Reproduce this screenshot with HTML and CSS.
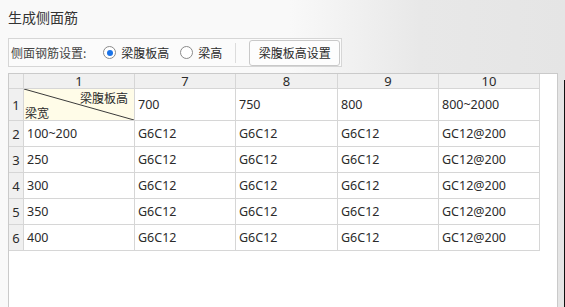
FILE: index.html
```html
<!DOCTYPE html>
<html>
<head>
  <title>生成侧面筋</title>
  <link rel="stylesheet" href="styles.css">
</head>
<body>
  <div class="page">
    <h1 class="title">生成侧面筋</h1>

    <div class="toolbar">
      <span class="label">侧面钢筋设置:</span>
      <label class="radio checked"><span class="dot"></span>梁腹板高</label>
      <label class="radio"><span class="dot"></span>梁高</label>
      <span class="sep"></span>
      <button class="btn">梁腹板高设置</button>
    </div>

    <div class="panel">
      <div class="grid">
        <!-- header row -->
        <div class="cell head"></div>
        <div class="cell head">1</div>
        <div class="cell head">7</div>
        <div class="cell head">8</div>
        <div class="cell head">9</div>
        <div class="cell head">10</div>

        <!-- row 1 -->
        <div class="cell rowhead">1</div>
        <div class="cell diag">
          <svg class="diag-line" viewBox="0 0 100 100" preserveAspectRatio="none">
            <line x1="0" y1="0" x2="100" y2="100" stroke="#3a3a3a" stroke-width="1" vector-effect="non-scaling-stroke"/>
          </svg>
          <span class="diag-top">梁腹板高</span>
          <span class="diag-bottom">梁宽</span>
        </div>
        <div class="cell">700</div>
        <div class="cell">750</div>
        <div class="cell">800</div>
        <div class="cell">800~2000</div>

        <div class="cell rowhead">2</div>
        <div class="cell">100~200</div>
        <div class="cell">G6C12</div>
        <div class="cell">G6C12</div>
        <div class="cell">G6C12</div>
        <div class="cell">GC12@200</div>

        <div class="cell rowhead">3</div>
        <div class="cell">250</div>
        <div class="cell">G6C12</div>
        <div class="cell">G6C12</div>
        <div class="cell">G6C12</div>
        <div class="cell">GC12@200</div>

        <div class="cell rowhead">4</div>
        <div class="cell">300</div>
        <div class="cell">G6C12</div>
        <div class="cell">G6C12</div>
        <div class="cell">G6C12</div>
        <div class="cell">GC12@200</div>

        <div class="cell rowhead">5</div>
        <div class="cell">350</div>
        <div class="cell">G6C12</div>
        <div class="cell">G6C12</div>
        <div class="cell">G6C12</div>
        <div class="cell">GC12@200</div>

        <div class="cell rowhead">6</div>
        <div class="cell">400</div>
        <div class="cell">G6C12</div>
        <div class="cell">G6C12</div>
        <div class="cell">G6C12</div>
        <div class="cell">GC12@200</div>
      </div>
    </div>
  </div>

  <!-- edge of the window behind -->
  <div class="edge"></div>
</body>
</html>
```

FILE: styles.css
```css
/* page and background */
body {
  margin: 0;
  font-family: "Noto Sans", "Noto Sans CJK SC", sans-serif;
  color: #2b2b2b;
  background: linear-gradient(to right, #f9f9f9 0, #f9f9f9 290px, #e8e8e8 420px, #e5e5e5 100%);
  overflow: hidden;
}

.page {
  display: flex;
  flex-direction: column;
  height: 100vh;
  padding-left: 8px;
}

.title {
  margin: 0;
  padding-top: 8px;
  font-size: 14px;
  font-weight: normal;
  line-height: 19px;
  color: #333;
  font-family: "Noto Sans CJK SC", sans-serif;
}

/* toolbar with radios and button */
.toolbar {
  box-sizing: border-box;
  display: flex;
  align-items: center;
  width: 334px;
  height: 29px;
  margin-top: 11px;
  padding-left: 2px;
  border: 1px solid #d6d6d6;
  background: #fbfbfb;
  font-family: "Noto Sans CJK SC", sans-serif;
  font-size: 12px;
  color: #444;
}

.label {
  margin-right: 17px;
}

.radio {
  display: flex;
  align-items: center;
  gap: 5px;
  margin-right: 11px;
  color: #2b2b2b;
}

.radio .dot {
  box-sizing: border-box;
  width: 13px;
  height: 13px;
  border: 1px solid #8a8a8a;
  border-radius: 50%;
  background: #fff;
  display: flex;
  align-items: center;
  justify-content: center;
}

.radio.checked .dot::after {
  content: "";
  width: 6px;
  height: 6px;
  border-radius: 50%;
  background: #1a73e8;
}

.sep {
  width: 1px;
  height: 20px;
  background: #dcdcdc;
  margin: 0 13px 0 2px;
}

.btn {
  box-sizing: border-box;
  height: 26px;
  width: 91px;
  padding: 0;
  border: 1px solid #c9c9c9;
  border-radius: 3px;
  background: #fdfdfd;
  font-family: "Noto Sans CJK SC", sans-serif;
  font-size: 12px;
  color: #2b2b2b;
}

/* table panel */
.panel {
  flex: 1;
  width: 550px;
  box-sizing: border-box;
  margin-top: 6px;
  border: 1px solid #cacaca;
  border-bottom: none;
  background: #fff;
}

.grid {
  display: grid;
  grid-template-columns: 15px 111px 101px 102px 101px 101px;
  grid-template-rows: 15px 32px repeat(5, 26px);
  width: 531px;
}

.cell {
  box-sizing: border-box;
  display: flex;
  align-items: center;
  padding-left: 3px;
  border-right: 1px solid #d6d6d6;
  border-bottom: 1px solid #d6d6d6;
  font-size: 12.5px;
  white-space: nowrap;
}

.cell.head {
  justify-content: center;
  padding-left: 0;
  background: #f0f0f0;
  font-size: 13px;
  line-height: 14px;
}

.cell.rowhead {
  justify-content: center;
  padding-left: 0;
  background: #f0f0f0;
  font-size: 13px;
}

/* diagonal header cell */
.cell.diag {
  position: relative;
  display: block;
  padding: 0;
  background: #fffce8;
  font-family: "Noto Sans CJK SC", sans-serif;
  font-size: 12px;
}

.diag-line {
  position: absolute;
  left: 0;
  top: 0;
  width: 100%;
  height: 100%;
}

.diag-top {
  position: absolute;
  right: 6px;
  top: 1px;
  line-height: 15px;
}

.diag-bottom {
  position: absolute;
  left: 1px;
  bottom: 0;
  line-height: 15px;
}

.edge {
  position: fixed;
  left: 564px;
  top: 80px;
  bottom: 0;
  width: 1px;
  background: #111;
}
```
